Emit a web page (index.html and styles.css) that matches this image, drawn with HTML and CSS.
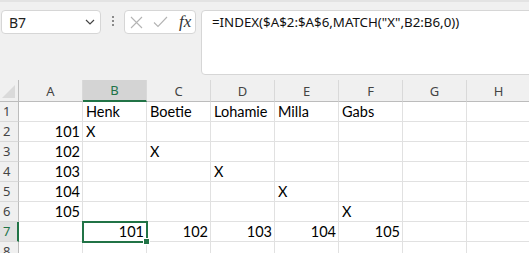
FILE: index.html
```html
<!DOCTYPE html>
<html lang="en">
  <head>
    <meta charset="UTF-8" />
    <title>Sheet</title>
    <link rel="stylesheet" href="styles.css">
  </head>
  <body>
    <div class="formula-bar">
      <div class="name-box">
        <span>B7</span>
        <svg class="chevron" width="10" height="6" viewBox="0 0 10 6">
          <path d="M1 1 L5 5 L9 1" fill="none" stroke="#444" stroke-width="1.2" />
        </svg>
      </div>
      <div class="grip"><i></i><i></i><i></i></div>
      <div class="fx-box">
        <svg width="13" height="13" viewBox="0 0 13 13">
          <path d="M1 1 L12 12 M12 1 L1 12" stroke="#b4b4b4" stroke-width="1.1" fill="none" />
        </svg>
        <svg width="15" height="12" viewBox="0 0 15 12">
          <path d="M1 6.5 L5 10.5 L14 1" stroke="#b4b4b4" stroke-width="1.1" fill="none" />
        </svg>
        <span class="fx">fx</span>
      </div>
      <div class="formula-input">=INDEX($A$2:$A$6,MATCH("X",B2:B6,0))</div>
    </div>

    <div class="sheet">
      <div class="hd corner">
        <svg width="13" height="13" viewBox="0 0 13 13"><polygon points="13,0 13,13 0,13" fill="#dadada" /></svg>
      </div>
      <div class="hd col">A</div>
      <div class="hd col sel">B</div>
      <div class="hd col">C</div>
      <div class="hd col">D</div>
      <div class="hd col">E</div>
      <div class="hd col">F</div>
      <div class="hd col">G</div>
      <div class="hd col">H</div>

      <div class="hd row">1</div>
      <div class="cell"></div>
      <div class="cell">Henk</div>
      <div class="cell">Boetie</div>
      <div class="cell">Lohamie</div>
      <div class="cell">Milla</div>
      <div class="cell">Gabs</div>
      <div class="cell"></div>
      <div class="cell"></div>

      <div class="hd row">2</div>
      <div class="cell num">101</div>
      <div class="cell">X</div>
      <div class="cell"></div>
      <div class="cell"></div>
      <div class="cell"></div>
      <div class="cell"></div>
      <div class="cell"></div>
      <div class="cell"></div>

      <div class="hd row">3</div>
      <div class="cell num">102</div>
      <div class="cell"></div>
      <div class="cell">X</div>
      <div class="cell"></div>
      <div class="cell"></div>
      <div class="cell"></div>
      <div class="cell"></div>
      <div class="cell"></div>

      <div class="hd row">4</div>
      <div class="cell num">103</div>
      <div class="cell"></div>
      <div class="cell"></div>
      <div class="cell">X</div>
      <div class="cell"></div>
      <div class="cell"></div>
      <div class="cell"></div>
      <div class="cell"></div>

      <div class="hd row">5</div>
      <div class="cell num">104</div>
      <div class="cell"></div>
      <div class="cell"></div>
      <div class="cell"></div>
      <div class="cell">X</div>
      <div class="cell"></div>
      <div class="cell"></div>
      <div class="cell"></div>

      <div class="hd row">6</div>
      <div class="cell num">105</div>
      <div class="cell"></div>
      <div class="cell"></div>
      <div class="cell"></div>
      <div class="cell"></div>
      <div class="cell">X</div>
      <div class="cell"></div>
      <div class="cell"></div>

      <div class="hd row sel">7</div>
      <div class="cell"></div>
      <div class="cell num active">101</div>
      <div class="cell num">102</div>
      <div class="cell num">103</div>
      <div class="cell num">104</div>
      <div class="cell num">105</div>
      <div class="cell"></div>
      <div class="cell"></div>

      <div class="hd row">8</div>
      <div class="cell"></div>
      <div class="cell"></div>
      <div class="cell"></div>
      <div class="cell"></div>
      <div class="cell"></div>
      <div class="cell"></div>
      <div class="cell"></div>
      <div class="cell"></div>
    </div>
  </body>
</html>
```

FILE: styles.css
```css
body {
  margin: 0;
  padding: 0;
  background: #ffffff;
  overflow: hidden;
  font-family: "Noto Sans", "Open Sans", sans-serif;
}

.formula-bar {
  height: 80px;
  box-sizing: border-box;
  background: #f0f0f0;
  border-top: 2px solid #e3e3e3;
  padding: 8px 0 0 1px;
  display: flex;
  align-items: flex-start;
}

.name-box {
  width: 100px;
  height: 24px;
  box-sizing: border-box;
  background: #fff;
  border: 1px solid #d6d6d6;
  border-radius: 4px;
  display: flex;
  align-items: center;
  justify-content: space-between;
  padding: 0 5px 0 7px;
  font-size: 14px;
  color: #222;
}

.grip {
  margin: 6px 0 0 11px;
  display: flex;
  flex-direction: column;
  gap: 2px;
}
.grip i {
  width: 2px;
  height: 2px;
  background: #8a8a8a;
}

.fx-box {
  margin-left: 10px;
  width: 72px;
  height: 24px;
  box-sizing: border-box;
  background: #fff;
  border: 1px solid #d6d6d6;
  border-radius: 4px;
  display: flex;
  align-items: center;
  gap: 10px;
  padding-left: 5px;
}
.fx {
  font-family: "Liberation Serif", serif;
  font-style: italic;
  font-size: 17px;
  color: #333;
  margin-left: 1px;
}

.formula-input {
  margin-left: 5px;
  flex: 1;
  margin-right: -10px;
  height: 65px;
  box-sizing: border-box;
  background: #fff;
  border: 1px solid #d6d6d6;
  border-radius: 4px;
  padding: 2px 10px;
  font-size: 13.3px;
  color: #111;
}

.sheet {
  display: grid;
  grid-template-columns: 19px repeat(8, 64px);
  grid-template-rows: 22px;
  grid-auto-rows: 20px;
  font-family: Lato, "Open Sans", sans-serif;
  font-size: 14.5px;
  color: #000;
}

.hd {
  background: #f0f0f0;
  color: #444;
  font-family: "Noto Sans", "Open Sans", sans-serif;
  font-size: 13px;
  box-sizing: border-box;
}
.hd.col {
  border-right: 1px solid #d9d9d9;
  border-bottom: 1px solid #bcbcbc;
  display: flex;
  align-items: center;
  justify-content: center;
}
.hd.col.sel {
  background: #d4d4d4;
  color: #217346;
  border-bottom: 2px solid #217346;
}
.hd.corner {
  border-right: 1px solid #bcbcbc;
  border-bottom: 1px solid #bcbcbc;
  display: flex;
  align-items: flex-end;
  justify-content: flex-end;
  padding: 0 3px 3px 0;
}
.hd.row {
  border-right: 1px solid #bcbcbc;
  border-bottom: 1px solid #d9d9d9;
  padding-left: 3px;
  line-height: 19px;
}
.hd.row.sel {
  background: #e1e1e1;
  color: #217346;
  border-right: 2px solid #217346;
}

.cell {
  box-sizing: border-box;
  border-right: 1px solid #e1e1e1;
  border-bottom: 1px solid #e1e1e1;
  padding: 0 3px;
  line-height: 19px;
  white-space: nowrap;
}
.cell.num {
  text-align: right;
  padding-right: 2px;
}
.cell.active {
  position: relative;
  z-index: 1;
  outline: 2px solid #217346;
  outline-offset: -1px;
}
.cell.active::after {
  content: "";
  position: absolute;
  right: -4px;
  bottom: -4px;
  width: 5px;
  height: 5px;
  background: #217346;
  border: 1px solid #fff;
}
```
